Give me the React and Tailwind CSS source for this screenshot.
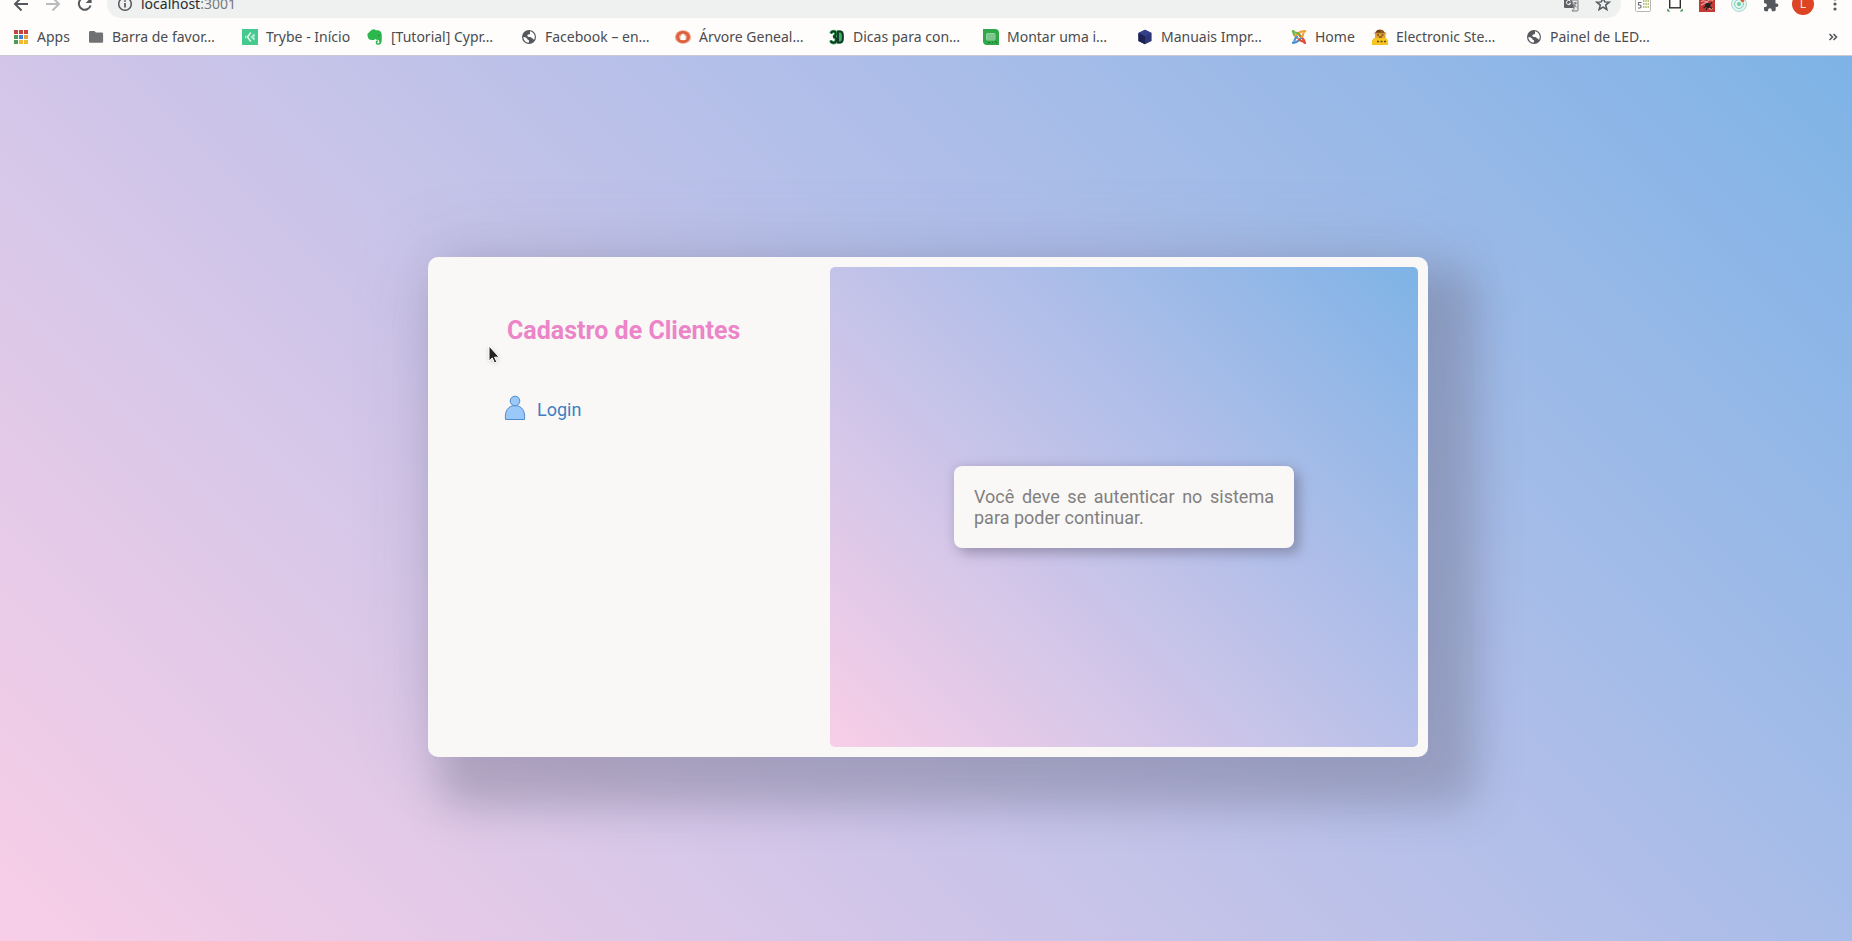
import React from "react";

function AppsIcon() {
  const colors = ["#c8443a", "#c8443a", "#c8443a", "#4f9a55", "#3f7fd6", "#dca53c", "#4f9a55", "#f0b92e", "#f0b92e"];
  return (
    <svg viewBox="0 0 16 16" className="size-4" aria-hidden="true">
      {colors.map((c, i) => (
        <rect key={i} x={1 + (i % 3) * 5} y={1 + Math.floor(i / 3) * 5} width="4" height="4" fill={c} />
      ))}
    </svg>
  );
}

function FolderIcon() {
  return (
    <svg viewBox="0 0 16 16" className="size-4" aria-hidden="true">
      <path d="M2.4 2h4l1.500 1.600h5.800c.8 0 1.400.6 1.400 1.400v7.400c0 .8-.6 1.400-1.400 1.400H2.400c-.8 0-1.400-.6-1.400-1.400v-9C1 2.600 1.600 2 2.400 2z" fill="#6f7174" />
    </svg>
  );
}

function TrybeIcon() {
  return (
    <svg viewBox="0 0 16 16" className="size-4" aria-hidden="true">
      <rect width="16" height="16" fill="#45c98f" />
      <path d="M8.800 3.500 5.500 8l3.300 4.500" fill="none" stroke="#d8f8e8" strokeWidth="1.600" />
      <path d="M12.500 4.500v7L8.500 8z" fill="#d8f8e8" />
      <path d="M9.800 8h2.700" stroke="#45c98f" strokeWidth=".8" />
      <path d="M3.800 6.800v2.400" stroke="#d8f8e8" strokeWidth="1.200" />
    </svg>
  );
}

function EvernoteIcon() {
  return (
    <svg viewBox="0 0 16 16" className="size-4" aria-hidden="true">
      <path d="M4.800.8C6 0 8 .1 8.800 1.300c1.400 0 3 .1 4.100.6 1.100.5 1.500 1.600 1.700 3 .3 2.300.4 5.300 0 7.600-.4 2.300-1.400 3.300-3.200 3.300-1.700 0-2.700-.9-2.700-2.300 0-1.300.9-2.200 2.300-2.200v1.500c-.6 0-.9.300-.9.800 0 .500.4.800 1 .8.900 0 1.200-.7 1.200-1.700 0-1.200-.7-1.700-2.200-1.900-1-.1-1.500-.4-1.900-1-.4.9-1 1.300-2 1.300-2.200 0-4-.5-4.800-1.700C.7 8.200.3 6.300.5 4.800z" fill="#2db84d" />
      <path d="M11.200 6.300c.8-.3 1.500-.2 2 .3" fill="none" stroke="#187a30" strokeWidth=".8" />
    </svg>
  );
}

function GlobeIcon() {
  return (
    <svg viewBox="0 0 16 16" className="size-4" aria-hidden="true">
      <circle cx="8" cy="8" r="7" fill="#55585c" />
      <path d="M2.300 8c1.500.2 2.700.4 3.500 1.200.7.700.6 1.500 1.500 1.700.9.2.8 1 .7 2.700C4.800 13.700 2.300 11.100 2.300 8zM9 2.300c2.700.4 4.800 2.800 4.800 5.700 0 1.200-.3 2.100-.8 3-.5-.6-.6-1.400-1.400-1.500-1.100-.1-1.100-.9-2.200-1.400-1-.4-2 .1-2.700-.6-.8-.8-.3-1.900.7-2 .9-.1 1.500 0 1.600-.9z" fill="#fff" />
    </svg>
  );
}

function RingIcon() {
  return (
    <svg viewBox="0 0 16 16" className="size-4" aria-hidden="true">
      <ellipse cx="8" cy="8" rx="8" ry="6.800" fill="#ea9a7c" />
      <ellipse cx="8" cy="8" rx="5.500" ry="4.800" fill="none" stroke="#dc5f3c" strokeWidth="2.600" />
      <path d="M5.500 11V7.200L8 4.500l2.500 2.700V11z" fill="#fff" />
    </svg>
  );
}

function ThreeDIcon() {
  return (
    <svg viewBox="0 0 16 16" className="size-4" aria-hidden="true">
      <path d="M8 1.500h3.500c3 0 3.500 2.900 3.500 6.500s-.5 6.500-3.500 6.500H8z" fill="#35b45f" />
      <path d="M2 4.500C2.700 1.700 6.800 1.500 6.800 4.800 6.800 7 5 7.600 4 7.700c1.500 0 3.300.6 3.300 3 0 3.900-4.800 3.900-5.500.8" fill="none" stroke="#35b45f" strokeWidth="3.400" />
      <path d="M9 2.500h2.300c2.200 0 2.500 2.200 2.500 5.500s-.3 5.500-2.500 5.500H9zM2 4.500C2.700 1.700 6.800 1.500 6.800 4.800 6.800 7 5 7.600 4 7.700c1.500 0 3.300.6 3.300 3 0 3.900-4.800 3.900-5.500.8" fill="none" stroke="#163325" strokeWidth="1.800" />
    </svg>
  );
}

function LeafIcon() {
  return (
    <svg viewBox="0 0 16 16" className="size-4" aria-hidden="true">
      <path d="M0 0h12a4 4 0 0 1 4 4v12H4a4 4 0 0 1-4-4z" fill="#2fa84a" />
      <rect x="3" y="4" width="9.500" height="7.500" rx="1.500" fill="#8ed49b" />
      <path d="M4.500 6h7M4.500 8h7M4.500 10h7" stroke="#4f9f69" strokeWidth=".9" strokeDasharray="1.200 .8" />
      <path d="M5 13.500h2M9 13.500h1M12 12l2 2" stroke="#1d7334" />
    </svg>
  );
}

function CubeIcon() {
  return (
    <svg viewBox="0 0 16 16" className="size-4" aria-hidden="true">
      <path d="M8 .7 14.600 4v8L8 15.300 1.400 12V4z" fill="#2c3679" />
      <path d="M8 .7 14.600 4 8 7.300 1.400 4z" fill="#35408a" />
      <path d="M8 7.300V15.300L1.400 12V4z" fill="#1b2352" />
    </svg>
  );
}

function JoomlaIcon() {
  return (
    <svg viewBox="0 0 16 16" className="size-4" fill="none" strokeWidth="2.200" strokeLinecap="round" aria-hidden="true">
      <path d="M2.500 2.500C2.200 5 3 6 4.500 7.200L6.500 9" stroke="#6fb345" />
      <path d="M4.300 6.800 7.800 3.800C9 2.800 11 2.300 13.500 2.500" stroke="#f0a132" />
      <path d="M8.500 6.500 11.500 9.200C13 10.500 13.800 11.500 13.500 13.500" stroke="#df4b35" />
      <path d="M2.500 13.500C5 13.800 6 13 7.300 11.800L10.500 8.800" stroke="#4a8fd0" />
      <path d="M4.500 3.500C6.500 3.500 7.500 4.500 8.800 5.800" stroke="#6fb345" />
      <path d="M12.300 4.500C12.300 6 11.500 7 10.500 8" stroke="#f0a132" />
      <path d="M8 10.500C9.500 12 10.500 12.500 12.300 12.300" stroke="#df4b35" />
      <path d="M3.500 11.500C3.500 10 4.500 9 5.800 7.800" stroke="#4a8fd0" />
      <g strokeWidth="2.600">
        <path d="M2.200 2.200h.1" stroke="#6fb345" />
        <path d="M13.700 2.200h.1" stroke="#f0a132" />
        <path d="M2.200 13.700h.1" stroke="#4a8fd0" />
        <path d="M13.700 13.700h.1" stroke="#df4b35" />
      </g>
    </svg>
  );
}

function WorkerIcon() {
  return (
    <svg viewBox="0 0 16 16" className="size-4" aria-hidden="true">
      <path d="M3 3.500h10.500V10H3z" fill="#e3a233" />
      <path d="M3.500 3.500C4-.5 12-.5 12.500 3.500l2.500.8H1z" fill="#8a5a24" />
      <path d="M5 2h3M9.500 6h2M5 6h2M7 8h3" stroke="#3d2b18" />
      <path d="M2 9h12l2 2.500V16H0v-4.500z" fill="#f7c520" />
      <path d="M5 12.500h2M8.500 12.500h2M12 12.500h2" stroke="#6b4a12" strokeWidth="1.400" />
    </svg>
  );
}

const bookmarks = [
  { label: "Apps", Icon: AppsIcon, width: "w-[33px]" },
  { label: "Barra de favor…", Icon: FolderIcon, width: "w-28" },
  { label: "Trybe - Início", Icon: TrybeIcon, width: "w-[83px]" },
  { label: "[Tutorial] Cypr…", Icon: EvernoteIcon, width: "w-28" },
  { label: "Facebook – en…", Icon: GlobeIcon, width: "w-28" },
  { label: "Árvore Geneal…", Icon: RingIcon, width: "w-28" },
  { label: "Dicas para con…", Icon: ThreeDIcon, width: "w-28" },
  { label: "Montar uma i…", Icon: LeafIcon, width: "w-28" },
  { label: "Manuais Impr…", Icon: CubeIcon, width: "w-28" },
  { label: "Home", Icon: JoomlaIcon, width: "w-[39px]" },
  { label: "Electronic Ste…", Icon: WorkerIcon, width: "w-28" },
  { label: "Painel de LED…", Icon: GlobeIcon, width: "w-28" },
];

function NavButton({ label, children }) {
  return (
    <button type="button" aria-label={label} className="flex h-7 w-8 shrink-0 items-center justify-center">
      {children}
    </button>
  );
}

function Toolbar() {
  return (
    <div className="flex h-[18px] items-end overflow-hidden pl-[5px]">
      <NavButton label="Voltar">
        <svg viewBox="0 0 16 16" className="size-4" fill="none" stroke="#55585c" strokeWidth="2" aria-hidden="true">
          <path d="M15 8H2.500M8.500 1.500 2 8l6.500 6.500" />
        </svg>
      </NavButton>
      <NavButton label="Avançar">
        <svg viewBox="0 0 16 16" className="size-4" fill="none" stroke="#b9bbbd" strokeWidth="2" aria-hidden="true">
          <path d="M1 8h12.500M7.500 1.500 14 8l-6.500 6.500" />
        </svg>
      </NavButton>
      <NavButton label="Recarregar">
        <svg viewBox="0 0 16 16" className="size-4" fill="none" stroke="#55585c" strokeWidth="2" aria-hidden="true">
          <path d="M13.600 9.500A6 6 0 1 1 12.400 3.800" />
          <path d="M14.600 1v6h-6z" fill="#55585c" stroke="none" />
        </svg>
      </NavButton>
      <div className="ml-1.5 flex h-7 flex-1 items-center gap-2 rounded-full bg-[#eef1f0] pr-2.5 pl-2.5">
        <svg viewBox="0 0 16 16" className="size-4 shrink-0" fill="none" stroke="#55585c" strokeWidth="1.500" aria-hidden="true">
          <circle cx="8" cy="8" r="6.300" />
          <path d="M8 7v4.500M8 4.200v1.600" strokeWidth="1.700" />
        </svg>
        <p className="flex-1 text-sm text-[#2a2c2f]">
          localhost<span className="text-[#77797c]">:3001</span>
        </p>
        <button type="button" aria-label="Traduzir">
          <svg viewBox="0 0 16 16" className="size-4" aria-hidden="true">
            <path d="M1 1h7l3 11H2a1 1 0 0 1-1-1z" fill="#5f6164" />
            <path d="M8.500 4H14a1 1 0 0 1 1 1v9a1 1 0 0 1-1 1H9l2.300-3z" fill="#e6e8e8" stroke="#77797c" />
            <path d="M7.500 5.200a2.200 2.200 0 1 0 .3 2.100H5.900" fill="none" stroke="#fff" />
            <path d="M10.300 7h3.900M12.300 6v1c0 2-.8 3-1.500 4M11 8.500c.6 1.200 1.500 2 2.600 2.600" fill="none" stroke="#77797c" />
          </svg>
        </button>
        <button type="button" aria-label="Favoritar" className="ml-2">
          <svg viewBox="0 0 16 16" className="size-4" fill="none" stroke="#55585c" strokeWidth="1.500" aria-hidden="true">
            <path d="m8 1.800 1.700 4.100 4.500.3-3.500 2.900 1.200 4.400L8 11.100l-3.900 2.400 1.200-4.400-3.500-2.900 4.500-.3z" />
          </svg>
        </button>
      </div>
      <div className="ml-3.5 flex h-7 items-center gap-4">
        <button type="button" aria-label="Extensão de planilha">
          <svg viewBox="0 0 16 16" className="size-4" fill="none" aria-hidden="true">
            <rect x=".5" y=".5" width="15" height="15" rx="1" fill="#fff" stroke="#b5b7b8" />
            <path d="M6.500 6.500H3.500v2.500h1.300c1.700 0 1.700 3 0 3H3" stroke="#6b6d70" strokeWidth="1.200" />
            <path d="M8 5H14M8 8H14M8 11H14" stroke="#b9c37a" strokeWidth="2" strokeDasharray="1.500 .8" />
          </svg>
        </button>
        <button type="button" aria-label="Captura de tela">
          <svg viewBox="0 0 16 16" className="size-4" fill="none" aria-hidden="true">
            <rect x="2.700" y="3" width="10.600" height="8.800" stroke="#2b2d2f" strokeWidth="1.400" />
            <path d="M.3 12.500v3h3zM15.700 12.500v3h-3z" fill="#2f8f45" />
            <path d="M.7 3V.7H3M15.300 3V.7H13" stroke="#2f8f45" />
          </svg>
        </button>
        <button type="button" aria-label="Extensão vermelha">
          <svg viewBox="0 0 16 16" className="size-4" fill="none" aria-hidden="true">
            <rect width="16" height="16" fill="#c43a35" />
            <path d="M2 6c2-3 5 1 7-1s4-1 5 0M2 9c3-1 4-3 7-2M10 12c1 2 3 1 4 0" stroke="#f1c9c5" />
            <path d="M7.500 7h2.500l1.500 1.500v2L10 12H8.500L6 10.500V8.500z" fill="#25211f" />
            <path d="M4.500 12l2-1.500M7 14l1-2M11 8l2-1.500M11 11l2 1.500" stroke="#25211f" strokeWidth="1.200" />
          </svg>
        </button>
        <button type="button" aria-label="Radar">
          <svg viewBox="0 0 16 16" className="size-4" fill="none" aria-hidden="true">
            <circle cx="8" cy="8" r="7.500" fill="#e5f6f2" stroke="#a5d9cf" />
            <circle cx="8" cy="8" r="4.500" stroke="#7fcdbb" />
            <circle cx="8" cy="8" r="2" fill="#69d0a0" />
            <circle cx="11.500" cy="4.500" r="1.800" fill="#e05a34" />
          </svg>
        </button>
        <button type="button" aria-label="Extensões">
          <svg viewBox="0 0 16 16" className="size-4" aria-hidden="true">
            <path d="M13.500 7.500h-1V4.700c0-.8-.6-1.400-1.400-1.400H8.500v-1a1.800 1.800 0 0 0-3.600 0v1H2.300C1.500 3.300 1 3.900 1 4.700v2.600h1a1.900 1.900 0 0 1 0 3.800H1v2.700c0 .8.600 1.400 1.400 1.400H5v-1a1.900 1.900 0 0 1 3.800 0v1h2.500c.8 0 1.400-.6 1.400-1.400v-2.700h.9a1.800 1.800 0 0 0 0-3.600z" fill="#55585c" />
          </svg>
        </button>
        <button type="button" aria-label="Perfil" className="-mx-[3px] flex size-[22px] items-center justify-center rounded-full bg-[#dc4424] text-xs leading-none text-[#fbe3dc]">
          L
        </button>
        <button type="button" aria-label="Menu">
          <svg viewBox="0 0 16 16" className="size-4" fill="#55585c" aria-hidden="true">
            <circle cx="8" cy="3" r="1.600" />
            <circle cx="8" cy="8" r="1.600" />
            <circle cx="8" cy="13" r="1.600" />
          </svg>
        </button>
      </div>
      <div className="w-[9px] shrink-0" />
    </div>
  );
}

function BookmarksBar() {
  return (
    <nav aria-label="Favoritos" className="flex h-[37px] items-center gap-[18px] pl-[13px]">
      {bookmarks.map(({ label, Icon, width }) => (
        <a key={label} href="#" className="flex shrink-0 items-center gap-2">
          <Icon />
          <span className={`${width} text-sm whitespace-nowrap text-[#4a4c4f]`}>{label}</span>
        </a>
      ))}
      <button type="button" aria-label="Mais favoritos" className="mr-3.5 ml-auto">
        <svg viewBox="0 0 10 10" className="size-2.5" fill="none" stroke="#55585c" strokeWidth="1.600" aria-hidden="true">
          <path d="M1.500 2 4.500 5l-3 3M5.500 2l3 3-3 3" />
        </svg>
      </button>
    </nav>
  );
}

function UserIcon() {
  return (
    <svg viewBox="0 0 24 26" className="h-[26px] w-6 self-start" fill="#9ac8f8" stroke="#4c8ccc" strokeWidth="1" aria-hidden="true">
      <path d="M2.500 24.500C1.500 16.500 5 10.500 12 10.500S22.500 16.500 21.500 24.500z" strokeLinejoin="round" />
      <circle cx="12" cy="6" r="4.800" />
    </svg>
  );
}

function Cursor() {
  return (
    <svg viewBox="0 0 14 20" className="pointer-events-none absolute top-[88px] left-[60px] h-5 w-3.5 drop-shadow-sm" aria-hidden="true">
      <path d="M1 1v15l3.300-3 2.200 5 2.300-1-2.200-4.800h4.600z" fill="#222" stroke="#fff" strokeWidth="1" />
    </svg>
  );
}

export default function App() {
  return (
    <div className="flex min-h-screen flex-col font-['Roboto',sans-serif]">
      <header className="border-b border-[#c9c9d2] bg-[#fefdfc] font-['Noto_Sans',sans-serif]">
        <Toolbar />
        <BookmarksBar />
      </header>
      <main className="flex flex-1 items-center justify-center bg-linear-45 from-[#f8cee7] via-[#b7c0e9] via-55% to-[#7eb3e6] pt-[17px] pl-1">
        <section className="relative flex min-h-[500px] w-[1000px] rounded-[10px] bg-[#f9f8f7] p-2.5 shadow-[30px_30px_40px_20px_rgba(110,110,135,0.38),0_0_80px_rgba(110,110,150,0.18)]">
          <div className="w-[392px] pt-12 pl-[65px]">
            <h1 className="pl-1 text-[25px] leading-8 font-bold text-[#ec84c8]">Cadastro de Clientes</h1>
            <a href="#" className="mt-12 flex items-center gap-2.5 text-lg leading-[30px] text-[#4080c0]">
              <UserIcon />
              Login
            </a>
          </div>
          <div className="flex flex-1 items-center justify-center rounded-[5px] bg-linear-45 from-[#f8cee7] via-[#b7c0e9] via-55% to-[#7eb3e6]">
            <p className="w-[340px] rounded-lg bg-[#f9f8f7] p-5 text-justify text-lg leading-[21px] text-[#82807e] shadow-[6px_6px_12px_rgba(100,95,120,0.4),0_0_12px_rgba(100,95,120,0.2)]">
              Você deve se autenticar no sistema para poder continuar.
            </p>
          </div>
          <Cursor />
        </section>
      </main>
    </div>
  );
}
